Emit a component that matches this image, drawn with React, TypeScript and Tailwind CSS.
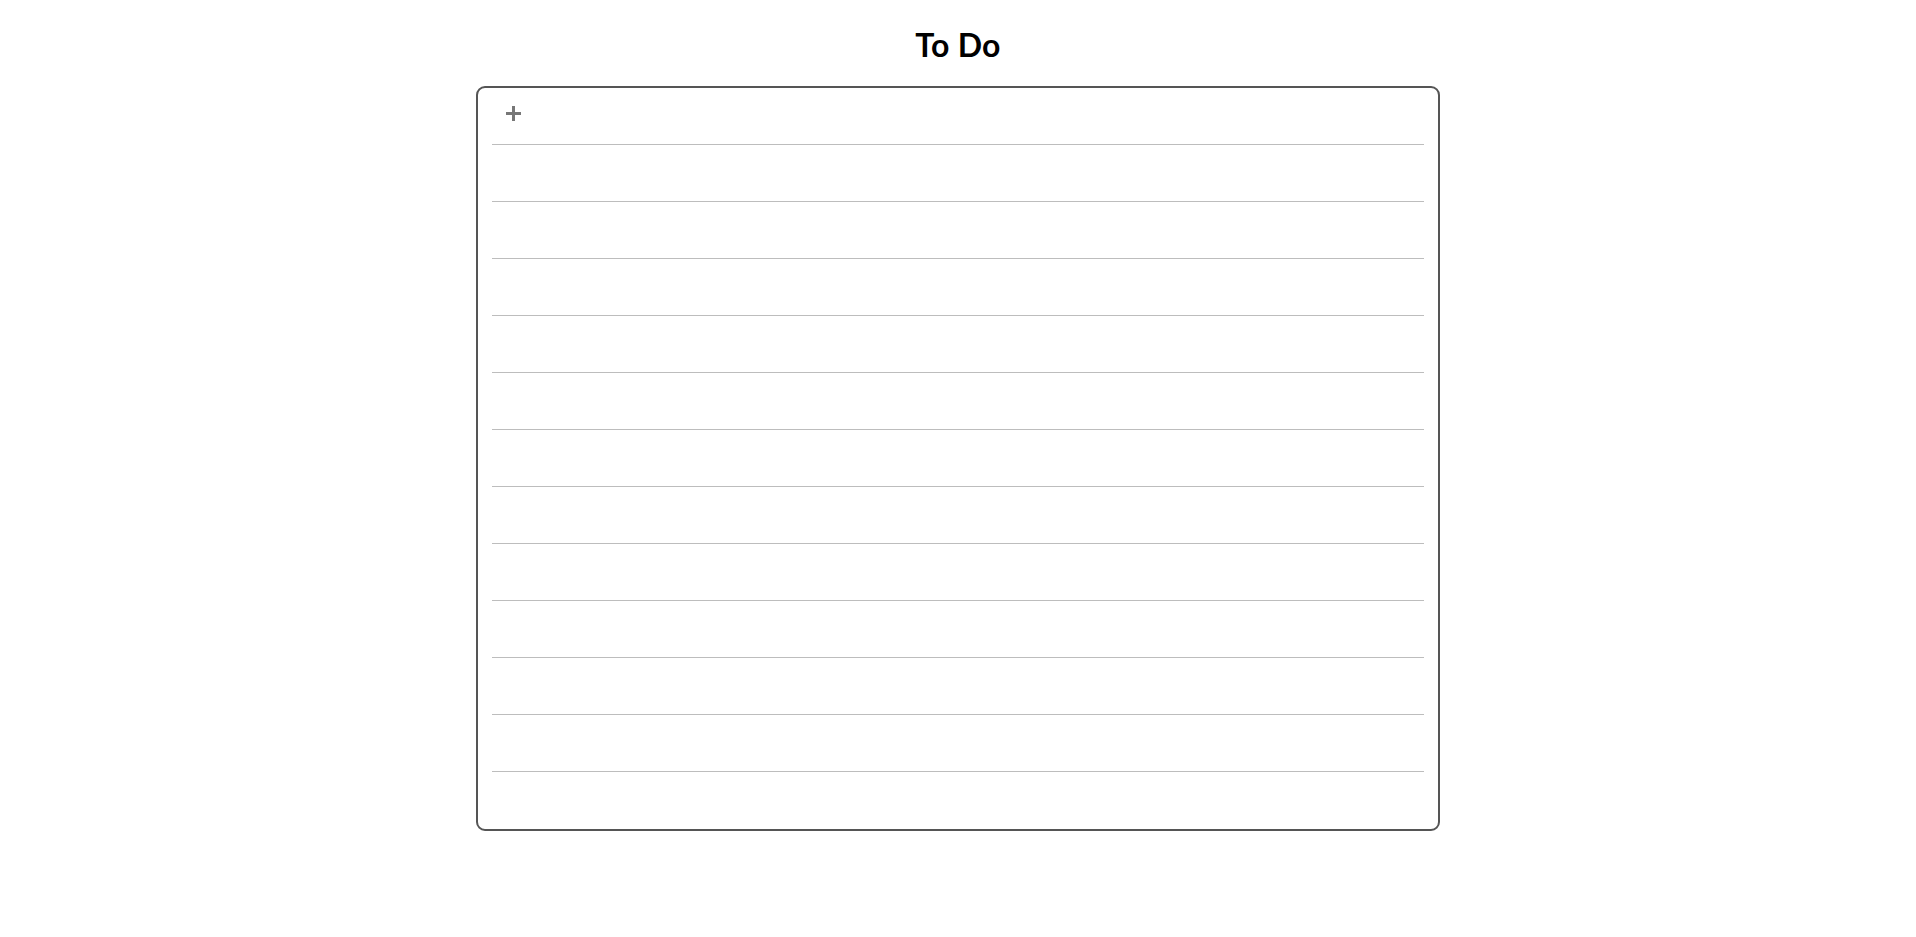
import React from "react";

const ROWS = 13;

export default function App() {
  return (
    <div className="min-h-screen bg-white font-['Lato','Liberation_Sans',sans-serif] text-black">
      <div className="flex flex-col items-center pt-[24px]">
        <h1 className="text-[32px] font-bold leading-[41px] tracking-[0.3px]">To Do</h1>

        <div className="mt-[21px] w-[964px] rounded-[9px] border-2 border-[#555555] px-[14px]">
          {Array.from({ length: ROWS }).map((_, i) => (
            <div
              key={i}
              className={[
                "flex h-[57px] items-center",
                i < ROWS - 1 ? "border-b border-[#bdbdbd]" : "",
              ].join(" ")}
            >
              {i === 0 && (
                <button type="button" className="ml-[13px] -mt-[5px] text-[#777777]">
                  <svg width="17" height="17" viewBox="0 0 17 17" aria-hidden="true">
                    <path d="M8.5 1V16M1 8.5H16" stroke="currentColor" strokeWidth="3" />
                  </svg>
                </button>
              )}
            </div>
          ))}
        </div>
      </div>
    </div>
  );
}
